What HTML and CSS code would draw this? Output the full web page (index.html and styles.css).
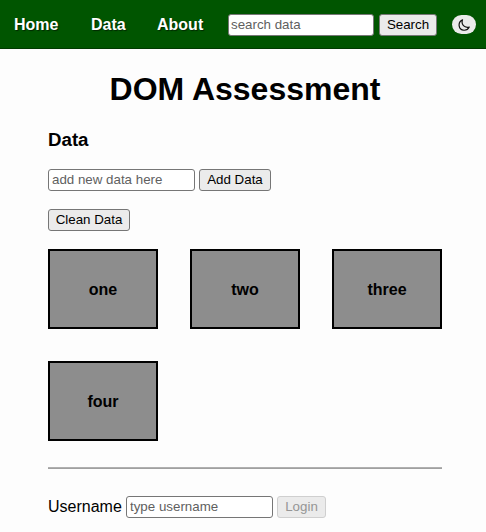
FILE: index.html
```html
<!DOCTYPE html>
<html lang="en">
<head>
<meta charset="utf-8">
<title>DOM Assessment</title>
<link rel="stylesheet" href="styles.css">
</head>
<body>
<nav class="navbar">
  <a class="nav-link home">Home</a>
  <a class="nav-link data">Data</a>
  <a class="nav-link about">About</a>
  <form class="search">
    <input class="field search-field" type="text" placeholder="search data">
    <button class="btn search-btn" type="button">Search</button>
  </form>
  <button class="theme-toggle" type="button" aria-label="Toggle theme">
    <svg viewBox="0 0 16 16" width="12" height="12"><path d="M6 1.2C-.8 4.2.3 14.7 8 15c3.200.1 5.700-1.400 7-4.200C8.500 12.200 3.800 7.500 6 1.200Z"/></svg>
  </button>
</nav>
<main class="content">
  <h1 class="title">DOM Assessment</h1>
  <h2 class="subtitle">Data</h2>
  <form class="row add-row">
    <input class="field" type="text" placeholder="add new data here">
    <button class="btn add-btn" type="button">Add Data</button>
  </form>
  <div class="row clean-row">
    <button class="btn clean-btn" type="button">Clean Data</button>
  </div>
  <section class="cards">
    <div class="card">one</div>
    <div class="card">two</div>
    <div class="card">three</div>
    <div class="card">four</div>
  </section>
  <hr class="divider">
  <form class="row login-row">
    <label class="label" for="username">Username</label>
    <input class="field" id="username" type="text" placeholder="type username">
    <button class="btn login-btn" type="button" disabled>Login</button>
  </form>
</main>
</body>
</html>
```
FILE: styles.css
```css
* {
  box-sizing: border-box;
}

body {
  margin: 0;
  height: 532px;
  overflow: hidden;
  background: #fdfdfd;
  color: #000;
  font: 16px/18px "Liberation Sans", Arial, sans-serif;
}

.navbar {
  display: flex;
  align-items: center;
  height: 49px;
  padding: 1px 10px 0 14px;
  background: #005500;
  border-bottom: 1px solid #003a00;
}

.nav-link {
  color: #fff;
  font-weight: bold;
  white-space: nowrap;
  text-shadow: 1px 1px 1px #002800;
}

.home { width: 77px; }
.data { width: 66px; }
.about { width: 71px; }

.search {
  display: flex;
  gap: 5px;
}

.field {
  width: 147px;
  height: 22px;
  margin: 0;
  padding: 0 3px 1px;
  border: 1px solid #767676;
  border-radius: 3px;
  background: #fff;
  font: 13.33px "Liberation Sans", Arial, sans-serif;
}

.search-field {
  width: 146px;
  padding-left: 2px;
}

.field::placeholder {
  color: #5f5f5f;
  opacity: 1;
}

.btn {
  height: 22px;
  margin: 0;
  padding: 0 0 1px;
  border: 1px solid #767676;
  border-radius: 3px;
  background: #ebebeb;
  color: #000;
  font: 13.33px "Liberation Sans", Arial, sans-serif;
}

.btn:disabled {
  border-color: #cfcfcf;
  color: #959595;
}

.search-btn { width: 58px; }
.add-btn { width: 72px; }
.clean-btn { width: 82px; }
.login-btn { width: 49px; }

.theme-toggle {
  display: flex;
  align-items: center;
  justify-content: center;
  width: 24px;
  height: 19px;
  margin: 0 0 0 auto;
  padding: 0;
  border: 0;
  border-radius: 10px;
  background: #ebebeb;
}

.theme-toggle svg {
  fill: none;
  stroke: #111;
  stroke-width: 1.6;
  stroke-linejoin: round;
}

.content {
  padding: 22px 44px 0 48px;
}

.title {
  margin: 0;
  font-size: 32px;
  line-height: 37px;
  text-align: center;
}

.subtitle {
  margin: 21px 0 18px;
  font-size: 18.7px;
  line-height: 22px;
}

.row {
  display: flex;
  align-items: center;
  gap: 4px;
}

.clean-row {
  margin: 18px 0;
}

.cards {
  display: grid;
  grid-template-columns: repeat(3, 110px);
  grid-auto-rows: 80px;
  gap: 32px;
}

.card {
  display: flex;
  align-items: center;
  justify-content: center;
  padding-top: 1px;
  border: 2px solid #000;
  background: #8d8d8d;
  font-weight: bold;
}

.divider {
  height: 2px;
  margin: 26px 0 27px;
  border: 0;
  border-top: 1px solid #b0b0b0;
  border-bottom: 1px solid #a0a0a0;
}

.label {
  width: 74px;
}
```
